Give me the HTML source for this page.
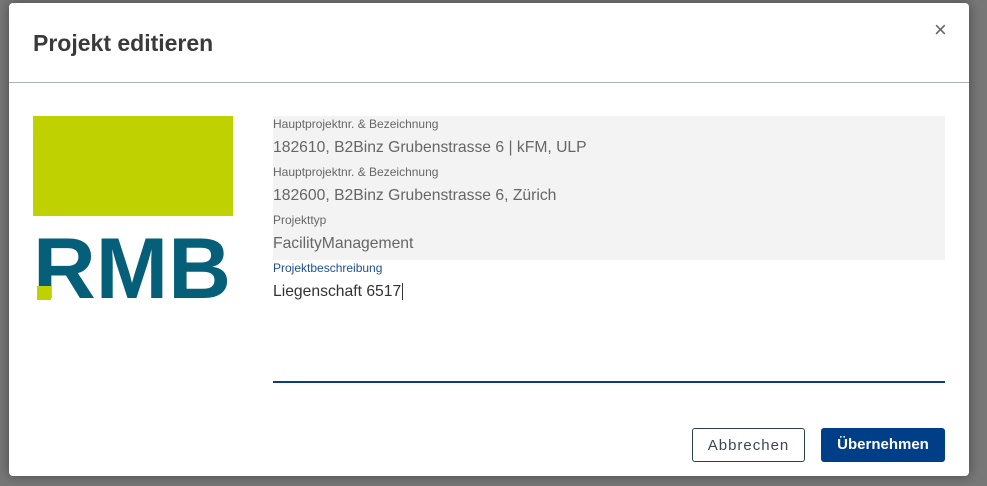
<!DOCTYPE html>
<html><head><style>
body{margin:0;width:987px;height:486px;background:#777;overflow:hidden;font-family:"Liberation Sans",sans-serif;position:relative}
.dlg{position:absolute;left:9px;top:3px;width:960px;height:473px;background:#fff;border-radius:4px;box-shadow:0 0 12px rgba(0,0,0,.4)}
h1{position:absolute;left:24px;top:27px;margin:0;font-size:23px;font-weight:bold;color:#3a3a3a}
.x{position:absolute;left:925px;top:14px;font-size:22px;color:#666}
.hr{position:absolute;left:0;top:79px;width:960px;height:1px;background:#aab4bd}
.grey{position:absolute;left:264px;top:113px;width:672px;height:144px;background:#f3f3f3}
.lab{position:absolute;left:264px;font-size:12px;color:#666}
.val{position:absolute;left:264px;font-size:15.7px;color:#666}
.btn{position:absolute;top:425px;height:34px;border-radius:3px;font-size:15px;text-align:center;line-height:34px;box-sizing:border-box}
</style></head><body>
<div class="dlg">
<h1>Projekt editieren</h1>
<div class="x">×</div>
<div class="hr"></div>
<svg style="position:absolute;left:24px;top:113px" width="200" height="185">
<rect x="0" y="0" width="200" height="100" fill="#bfd200"/>
<text x="0" y="182" font-family="Liberation Sans" font-weight="bold" font-size="86" fill="#055f78" textLength="198" lengthAdjust="spacingAndGlyphs">RMB</text>
<rect x="4" y="170" width="14" height="14" fill="#bfd200"/>
</svg>
<div class="grey"></div>
<div class="lab" style="top:114px">Hauptprojektnr. &amp; Bezeichnung</div>
<div class="val" style="top:136px">182610, B2Binz Grubenstrasse 6 | kFM, ULP</div>
<div class="lab" style="top:162px">Hauptprojektnr. &amp; Bezeichnung</div>
<div class="val" style="top:184px">182600, B2Binz Grubenstrasse 6, Zürich</div>
<div class="lab" style="top:210px">Projekttyp</div>
<div class="val" style="top:232px">FacilityManagement</div>
<div class="lab" style="top:258px;color:#1d4f91">Projektbeschreibung</div>
<div class="val" style="top:280px;color:#333">Liegenschaft 6517<span style="border-left:1px solid #333;margin-left:1px"></span></div>
<div style="position:absolute;left:264px;top:378px;width:672px;height:2px;background:#0d3d7a"></div>
<div class="btn" style="left:683px;width:113px;border:1px solid #2c3e50;color:#3c4656;letter-spacing:1px">Abbrechen</div>
<div class="btn" style="left:812px;width:124px;background:#003f87;color:#fff;font-weight:bold">Übernehmen</div>
</div>
</body></html>
